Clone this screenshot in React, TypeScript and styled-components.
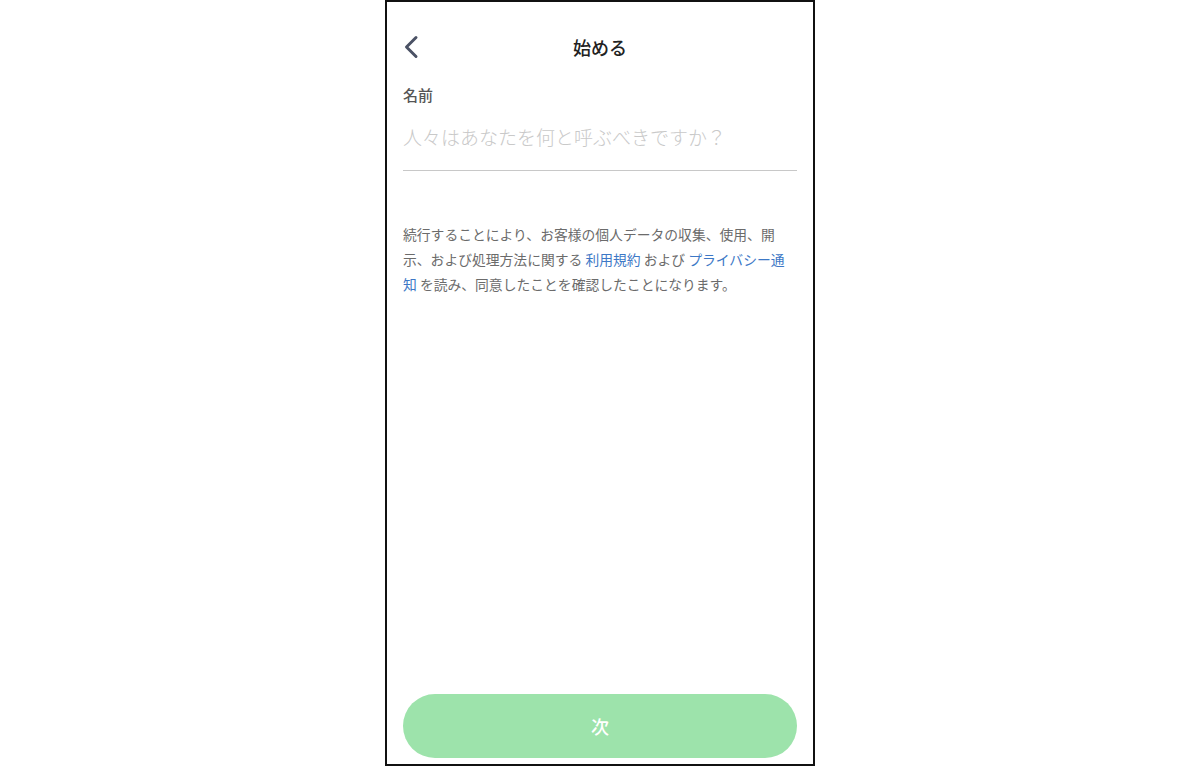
import React from "react";
import styled, { createGlobalStyle } from "styled-components";

const Global = createGlobalStyle`
  html, body { margin: 0; padding: 0; background: #fff; }
  body { font-family: "Noto Sans CJK JP", "Noto Sans", sans-serif; }
`;

const Frame = styled.div`
  box-sizing: border-box;
  width: 430px;
  height: 766px;
  margin: 0 auto;
  border: 2px solid #111;
  display: flex;
  flex-direction: column;
  padding: 0 16px 6px 16px;
  background: #fff;
`;

const Header = styled.div`
  position: relative;
  height: 56px;
  margin-top: 17px;
  display: flex;
  align-items: center;
  justify-content: center;
`;

const BackButton = styled.button`
  position: absolute;
  left: 0;
  top: 50%;
  transform: translateY(-50%);
  border: none;
  background: none;
  padding: 0;
  width: 16px;
  height: 24px;
  display: flex;
  align-items: center;
  cursor: pointer;
`;

const Title = styled.h1`
  margin: 0;
  font-size: 18px;
  font-weight: 500;
  color: #222;
`;

const Label = styled.div`
  margin-top: 9px;
  font-size: 15px;
  line-height: 22px;
  font-weight: 500;
  color: #555;
`;

const NameInput = styled.input`
  margin-top: 17px;
  border: none;
  border-bottom: 1px solid #c8c8c8;
  padding: 0 0 19px 0;
  height: 28px;
  line-height: 28px;
  font-family: inherit;
  font-size: 19px;
  font-weight: 300;
  color: #333;
  outline: none;
  background: transparent;
  &::placeholder {
    color: #c9c9c9;
    font-weight: 300;
  }
`;

const Terms = styled.p`
  margin: 51px 0 0 0;
  font-size: 13.8px;
  line-height: 25px;
  color: #6b6b6b;
`;

const Link = styled.a`
  color: #3d78c6;
  text-decoration: none;
`;

const Spacer = styled.div`
  flex: 1;
`;

const NextButton = styled.button`
  height: 64px;
  border: none;
  border-radius: 32px;
  background: #9de3ab;
  color: #fff;
  font-family: inherit;
  font-size: 18px;
  font-weight: 500;
  cursor: pointer;
`;

export default function App() {
  return (
    <>
      <Global />
      <Frame>
        <Header>
          <BackButton aria-label="戻る">
            <svg width="16" height="24" viewBox="0 0 16 24">
              <polyline
                points="13,2.5 3.5,12 13,21.5"
                fill="none"
                stroke="#4b5265"
                strokeWidth="3"
                strokeLinecap="round"
                strokeLinejoin="round"
              />
            </svg>
          </BackButton>
          <Title>始める</Title>
        </Header>
        <Label>名前</Label>
        <NameInput placeholder="人々はあなたを何と呼ぶべきですか？" />
        <Terms>
          続行することにより、お客様の個人データの収集、使用、開示、および処理方法に関する{" "}
          <Link href="#">利用規約</Link> および{" "}
          <Link href="#">プライバシー通知</Link>{" "}
          を読み、同意したことを確認したことになります。
        </Terms>
        <Spacer />
        <NextButton>次</NextButton>
      </Frame>
    </>
  );
}
